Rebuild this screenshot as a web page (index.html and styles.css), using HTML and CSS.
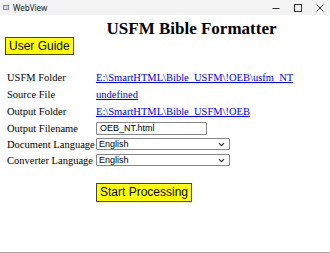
FILE: index.html
```html
<!DOCTYPE html>
<html>
<head>
<meta charset="utf-8">
<link rel="stylesheet" href="styles.css">
</head>
<body>
<div class="window">
  <div class="titlebar">
    <div class="app">
      <span class="app-icon"></span>
      <span class="app-name">WebView</span>
    </div>
    <div class="controls">
      <svg class="ctl" width="10" height="10" viewBox="0 0 10 10"><path d="M1.5 5.5h7" stroke="#333" stroke-width="1"/></svg>
      <svg class="ctl" width="10" height="10" viewBox="0 0 10 10"><rect x="1.5" y="1.5" width="7" height="7" fill="none" stroke="#333" stroke-width="1"/></svg>
      <svg class="ctl" width="10" height="10" viewBox="0 0 10 10"><path d="M1.5 1.5l7 7M8.5 1.5l-7 7" stroke="#333" stroke-width="1"/></svg>
    </div>
  </div>
  <div class="content">
    <h1 class="title">USFM Bible Formatter</h1>
    <button class="btn guide">User Guide</button>
    <div class="form">
      <div class="label">USFM Folder</div>
      <div class="value"><a href="#">E:\SmartHTML\Bible_USFM\!OEB\usfm_NT</a></div>
      <div class="label">Source File</div>
      <div class="value"><a href="#">undefined</a></div>
      <div class="label">Output Folder</div>
      <div class="value"><a href="#">E:\SmartHTML\Bible_USFM\!OEB</a></div>
      <div class="label short">Output Filename</div>
      <div class="value short"><input class="text" type="text" value="OEB_NT.html"></div>
      <div class="label short">Document Language</div>
      <div class="value short"><div class="sel"><span>English</span><svg class="chev" width="7" height="5" viewBox="0 0 7 5"><path d="M1 1.2l2.5 2.5L6 1.2" fill="none" stroke="#333" stroke-width="1.2"/></svg></div></div>
      <div class="label short">Converter Language</div>
      <div class="value short"><div class="sel"><span>English</span><svg class="chev" width="7" height="5" viewBox="0 0 7 5"><path d="M1 1.2l2.5 2.5L6 1.2" fill="none" stroke="#333" stroke-width="1.2"/></svg></div></div>
    </div>
    <div class="start-row">
      <button class="btn start">Start Processing</button>
    </div>
  </div>
</div>
</body>
</html>
```

FILE: styles.css
```css
html, body {
  margin: 0;
  padding: 0;
  background: #ffffff;
}
.window {
  width: 330px;
  height: 253px;
  box-sizing: border-box;
  border-bottom: 1px solid #a0a0a0;
  display: flex;
  flex-direction: column;
  overflow: hidden;
}
.titlebar {
  height: 15px;
  flex: none;
  background: #f3f3f3;
  display: flex;
  align-items: center;
  justify-content: space-between;
  font-family: "Noto Sans", "Liberation Sans", sans-serif;
  font-size: 8px;
  color: #222;
}
.app {
  display: flex;
  align-items: center;
  padding-left: 3px;
  gap: 4px;
}
.app-icon {
  width: 6px;
  height: 5px;
  border: 1px solid #8a8a8a;
  background: #cfd6e0;
  box-sizing: border-box;
}
.controls {
  display: flex;
  align-items: center;
  gap: 12px;
  padding-right: 5px;
}
.ctl {
  width: 10px;
  height: 10px;
}
.content {
  flex: 1;
  padding: 0 0 0 5px;
  font-family: "Liberation Serif", "Times New Roman", serif;
  font-size: 10.5px;
}
.title {
  margin: 6px 0 0 0;
  padding-left: 48px;
  text-align: center;
  font-size: 17px;
  line-height: 16px;
  font-weight: bold;
}
.btn {
  font-family: "Liberation Sans", Arial, sans-serif;
  background: #ffff00;
  border: 1px solid #444;
  color: #000;
  padding: 0 3px;
  margin: 0;
}
.guide {
  display: block;
  margin-top: 0;
  font-size: 12px;
  height: 18px;
  line-height: 16px;
}
.form {
  margin-top: 14px;
  display: grid;
  grid-template-columns: 89px auto;
  padding-left: 2px;
  align-items: center;
}
.label, .value {
  height: 17px;
  line-height: 17px;
  display: flex;
  align-items: center;
  white-space: nowrap;
}
.short {
  height: 16px;
}
.value a {
  color: #0000ee;
  text-decoration: underline;
}
.text {
  font-family: "Liberation Sans", Arial, sans-serif;
  font-size: 9px;
  width: 111px;
  height: 13px;
  box-sizing: border-box;
  border: 1px solid #858585;
  border-radius: 1px;
  padding: 0 3px;
  margin: 0;
}
.sel {
  font-family: "Liberation Sans", Arial, sans-serif;
  font-size: 9px;
  width: 134px;
  height: 12px;
  box-sizing: border-box;
  border: 1px solid #858585;
  border-radius: 1px;
  padding: 0 4px 0 2px;
  background: #fff;
  display: flex;
  align-items: center;
  justify-content: space-between;
  line-height: 10px;
}
.chev {
  width: 7px;
  height: 5px;
}
.start-row {
  margin-top: 15px;
  padding-left: 91px;
}
.start {
  font-size: 12px;
  height: 19px;
  line-height: 17px;
}
```
